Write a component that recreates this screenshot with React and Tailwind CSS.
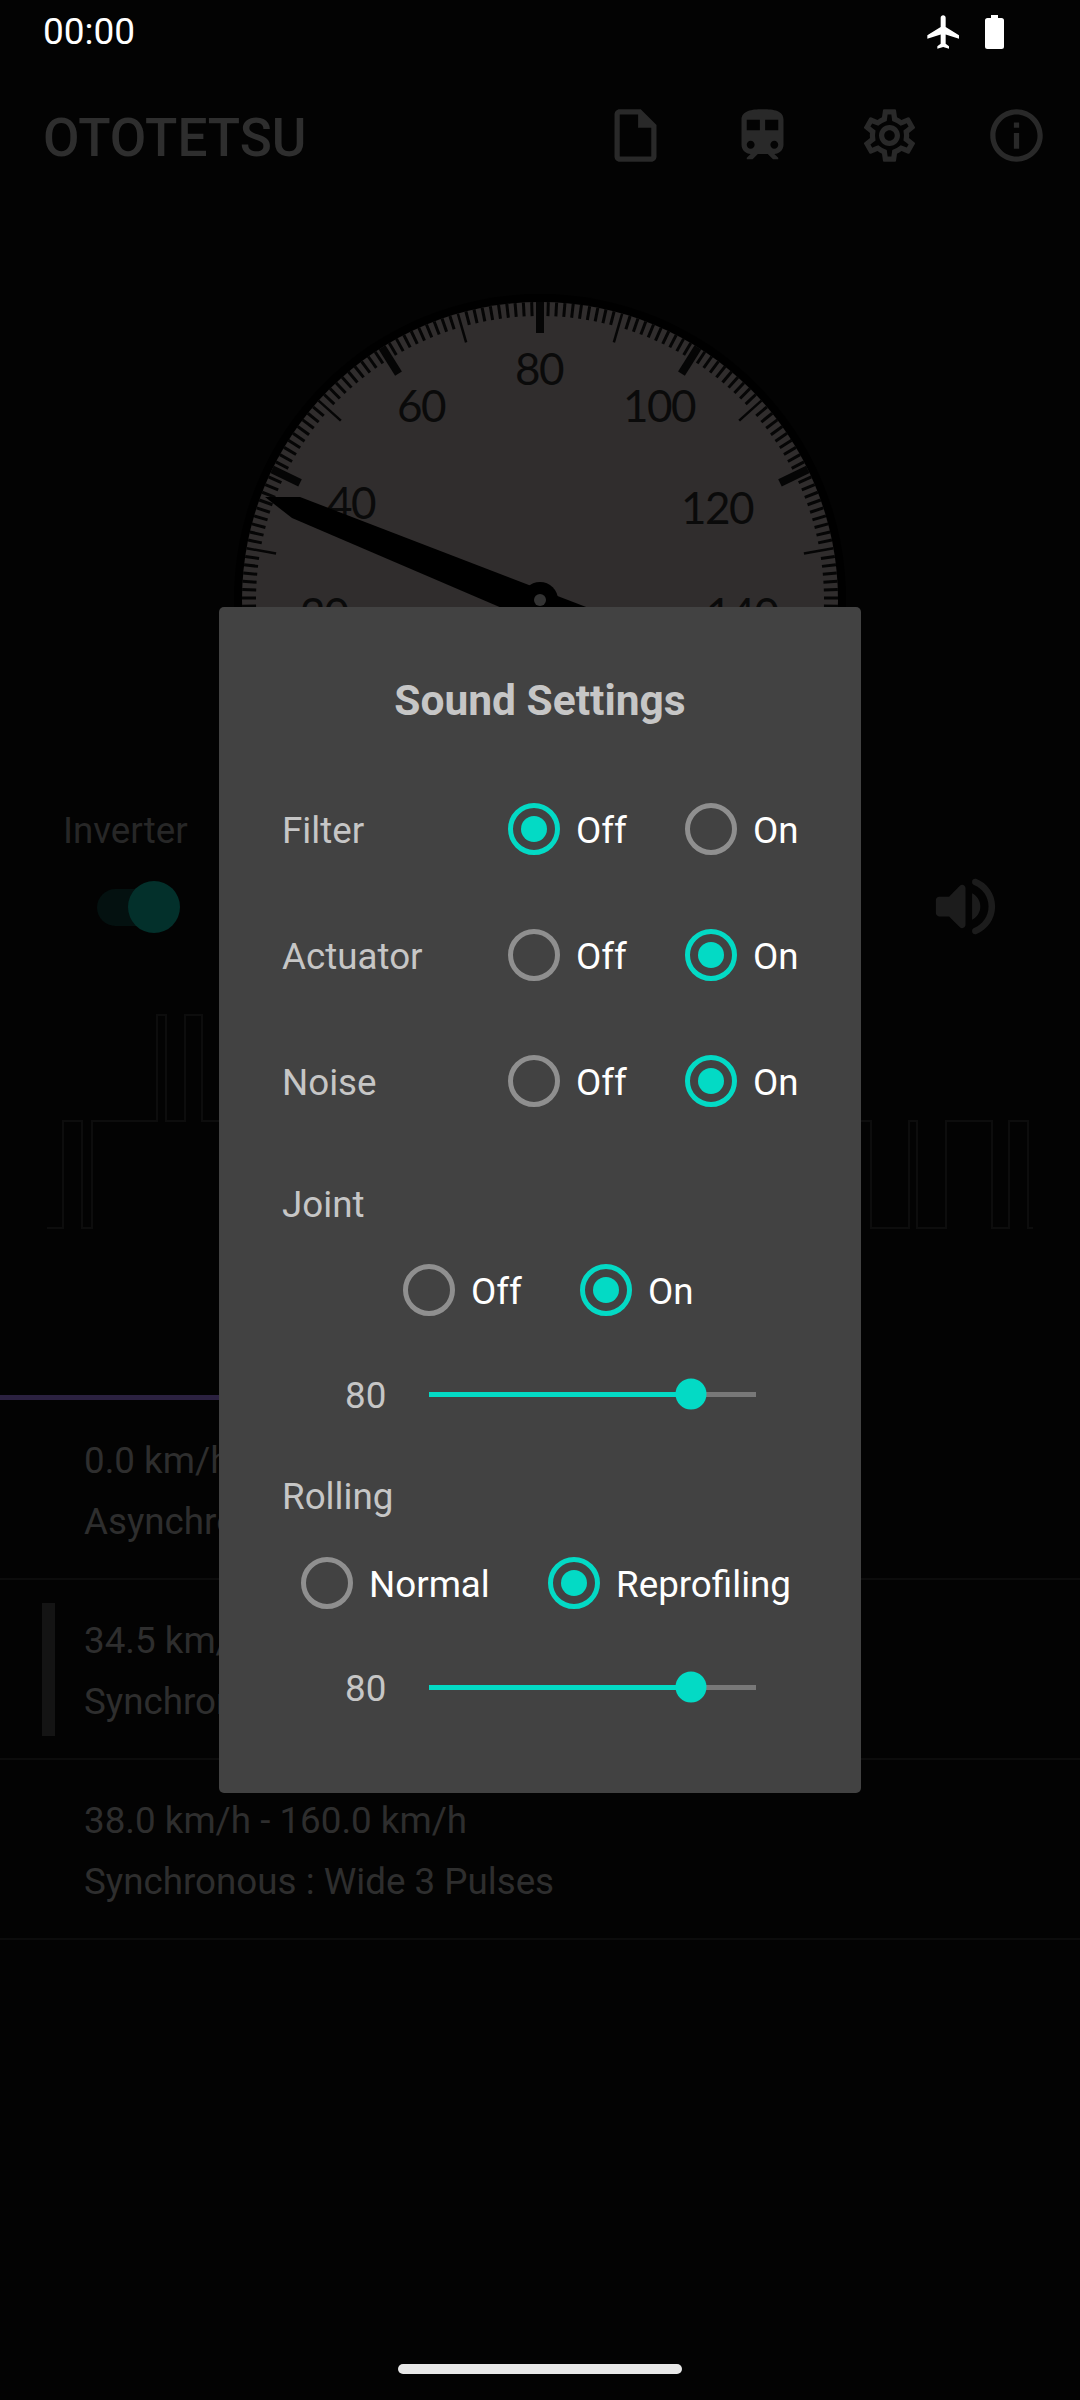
const flightPath = 'M21 16v-2l-8-5V3.5c0-.83-.67-1.5-1.5-1.5S10 2.67 10 3.5V9l-8 5v2l8-2.5V19l-2 1.5V22l3.5-1 3.5 1v-1.5L13 19v-5.5l8 2.5z';
const filePath = 'M14 2H6c-1.1 0-1.99.9-1.99 2L4 20c0 1.1.89 2 1.99 2H18c1.1 0 2-.9 2-2V8l-6-6zM6 20V4h7v5h5v11H6z';
const trainPath = 'M12 2c-4 0-8 .5-8 4v9.5C4 17.43 5.57 19 7.5 19L6 20.5v.5h2.23l2-2H14l2 2h2v-.5L16.5 19c1.93 0 3.5-1.57 3.5-3.5V6c0-3.5-3.58-4-8-4zM7.5 17c-.83 0-1.5-.67-1.5-1.5S6.67 14 7.5 14s1.5.67 1.5 1.5S8.33 17 7.5 17zm3.5-7H6V6h5v4zm2 0V6h5v4h-5zm3.5 7c-.83 0-1.5-.67-1.5-1.5s.67-1.5 1.5-1.5 1.5.67 1.5 1.5-.67 1.5-1.5 1.5z';
const gearPath = 'M19.43 12.98c.04-.32.07-.64.07-.98 0-.34-.03-.66-.07-.98l2.11-1.65c.19-.15.24-.42.12-.64l-2-3.46c-.09-.16-.26-.25-.44-.25-.06 0-.12.01-.17.03l-2.49 1c-.52-.4-1.08-.73-1.69-.98l-.38-2.65C14.46 2.18 14.25 2 14 2h-4c-.25 0-.46.18-.49.42l-.38 2.65c-.61.25-1.17.59-1.69.98l-2.49-1c-.06-.02-.12-.03-.18-.03-.17 0-.34.09-.43.25l-2 3.46c-.13.22-.07.49.12.64l2.11 1.65c-.04.32-.07.65-.07.98 0 .33.03.66.07.98l-2.11 1.65c-.19.15-.24.42-.12.64l2 3.46c.09.16.26.25.44.25.06 0 .12-.01.17-.03l2.49-1c.52.4 1.08.73 1.69.98l.38 2.65c.03.24.24.42.49.42h4c.25 0 .46-.18.49-.42l.38-2.65c.61-.25 1.17-.59 1.69-.98l2.49 1c.06.02.12.03.18.03.17 0 .34-.09.43-.25l2-3.46c.12-.22.07-.49-.12-.64l-2.11-1.65zm-1.98-1.71c.04.31.05.52.05.73 0 .21-.02.43-.05.73l-.14 1.13.89.7 1.08.84-.7 1.21-1.27-.51-1.04-.42-.9.68c-.43.32-.84.56-1.25.73l-1.06.43-.16 1.13-.2 1.35h-1.4l-.19-1.35-.16-1.13-1.06-.43c-.43-.18-.83-.41-1.23-.71l-.91-.7-1.06.43-1.27.51-.7-1.21 1.08-.84.89-.7-.14-1.13c-.03-.31-.05-.54-.05-.74s.02-.43.05-.73l.14-1.13-.89-.7-1.08-.84.7-1.21 1.27.51 1.04.42.9-.68c.43-.32.84-.56 1.25-.73l1.06-.43.16-1.13.2-1.35h1.39l.19 1.35.16 1.13 1.06.43c.43.18.83.41 1.23.71l.91.7 1.06-.43 1.27-.51.7 1.21-1.07.85-.89.7.14 1.13zM12 8c-2.21 0-4 1.79-4 4s1.79 4 4 4 4-1.79 4-4-1.79-4-4-4zm0 6c-1.1 0-2-.9-2-2s.9-2 2-2 2 .9 2 2-.9 2-2 2z';
const infoPath = 'M11 7h2v2h-2zm0 4h2v6h-2zm1-9C6.48 2 2 6.48 2 12s4.48 10 10 10 10-4.48 10-10S17.52 2 12 2zm0 18c-4.41 0-8-3.59-8-8s3.59-8 8-8 8 3.59 8 8-3.59 8-8 8z';
const volumePath = 'M3 10v4c0 .55.45 1 1 1h3l3.29 3.29c.63.63 1.71.18 1.71-.71V6.41c0-.89-1.08-1.34-1.71-.71L7 9H4c-.55 0-1 .45-1 1zm13.5 2c0-1.77-1.02-3.29-2.5-4.03v8.05c1.48-.73 2.5-2.25 2.5-4.02zM14 4.45v.2c0 .38.25.71.6.85C17.18 6.53 19 9.06 19 12s-1.82 5.47-4.4 6.5c-.36.14-.6.47-.6.85v.2c0 .63.63 1.07 1.21.85C18.6 19.11 21 15.84 21 12s-2.4-7.11-5.79-8.4c-.58-.23-1.21.22-1.21.85z';

const Icon = ({ d, className }) => (
  <svg viewBox="0 0 24 24" className={className} fill="currentColor">
    <path d={d} />
  </svg>
);

// gauge labels, centre coordinates inside the 640 box
const gaugeLabels = [
  ['20', 105, 334],
  ['40', 132, 223],
  ['60', 202, 126],
  ['80', 320, 89],
  ['100', 440, 126],
  ['120', 498, 228],
  ['140', 523, 334],
];

const Gauge = () => {
  const ticks = [];
  for (let km = 0; km <= 160; km++) {
    // the dial runs at 1.6 degrees per km/h
    const a = ((km - 80) * 1.6 * Math.PI) / 180;
    const major = km % 20 === 0;
    const mid = km % 10 === 0;
    const inner = major ? 267 : mid ? 268 : 284;
    const width = major ? 8 : mid ? 2.5 : 3;
    ticks.push(
      <line
        key={km}
        x1={320 + inner * Math.sin(a)}
        y1={320 - inner * Math.cos(a)}
        x2={320 + 298 * Math.sin(a)}
        y2={320 - 298 * Math.cos(a)}
        stroke="#050505"
        strokeWidth={width}
      />
    );
  }

  return (
    <svg width="640" height="640" viewBox="0 0 640 640" className="shrink-0">
      <circle cx="320" cy="320" r="306" fill="#000000" />
      <circle cx="320" cy="320" r="298" fill="#302d2d" />
      {ticks}
      {gaugeLabels.map(([label, x, y]) => (
        <text
          key={label}
          x={x - 1}
          y={y - 1}
          textAnchor="middle"
          dominantBaseline="central"
          fill="#0a0a0a"
          fontSize="44"
          letterSpacing="-1.5"
          className="font-['Lato',sans-serif]"
        >
          {label}
        </text>
      ))}
      <polygon points="45,217 80,217 400,340 380,370 72,238" fill="#000000" />
      <circle cx="320" cy="320" r="18" fill="#000000" />
      <circle cx="320" cy="320" r="6" fill="#333333" />
    </svg>
  );
};

const Radio = ({ label, checked, width }) => (
  <div className={`flex items-center gap-[16px] ${width}`}>
    <div
      className={
        checked
          ? 'flex h-[52px] w-[52px] shrink-0 items-center justify-center rounded-full border-[5px] border-[#03dac5]'
          : 'h-[52px] w-[52px] shrink-0 rounded-full border-[5px] border-[#8f8f8f]'
      }
    >
      {checked && <div className="h-[26px] w-[26px] rounded-full bg-[#03dac5]" />}
    </div>
    <span className="pt-[3px] text-[36.75px] leading-[48px] text-white">{label}</span>
  </div>
);

const SettingRow = ({ label, on }) => (
  <div className="flex h-[64px] items-center">
    <span className="w-[226px] pt-[3px] text-[36.75px] leading-[48px] text-[#c6c6c6]">{label}</span>
    <Radio label="Off" checked={!on} width="w-[177px]" />
    <Radio label="On" checked={on} />
  </div>
);

const VolumeSlider = ({ className }) => (
  <div className={`flex h-[40px] items-center pl-[63px] ${className}`}>
    <span className="w-[84px] pt-[3px] text-[36.75px] leading-[48px] text-[#c6c6c6]">80</span>
    <div className="relative h-[5px] w-[327px] bg-[#787878]">
      <div className="h-full w-[80%] bg-[#03dac5]" />
      <div className="absolute left-[80%] top-1/2 h-[31px] w-[31px] -translate-x-1/2 -translate-y-1/2 rounded-full bg-[#03dac5]" />
    </div>
  </div>
);

const waveLeft = '47,1228 63,1228 63,1121 82,1121 82,1228 92,1228 92,1121 157,1121 157,1015 166,1015 166,1121 185,1121 185,1015 202,1015 202,1121 225,1121';
const waveRight = '855,1121 871,1121 871,1228 909,1228 909,1121 917,1121 917,1228 946,1228 946,1121 992,1121 992,1228 1009,1228 1009,1121 1028,1121 1028,1228 1033,1228';

const patterns = [
  ['0.0 km/h - 34.5 km/h', 'Asynchronous', false],
  ['34.5 km/h - 38.0 km/h', 'Synchronous : Wide 9 Pulses', true],
  ['38.0 km/h - 160.0 km/h', 'Synchronous : Wide 3 Pulses', false],
];

export default function App() {
  return (
    <div className="relative h-[2400px] w-[1080px] overflow-hidden bg-[#030303] font-['Roboto',sans-serif]">
      {/* status bar */}
      <div className="flex h-[63px] items-center pl-[43px] pr-[76px] text-white">
        <span className="text-[37px] leading-none">00:00</span>
        <Icon d={flightPath} className="ml-auto h-[40px] w-[40px]" />
        <svg viewBox="0 0 19 34" className="ml-[21px] h-[34px] w-[19px]" fill="currentColor">
          <path d="M6 0h7v3h3.5A2.5 2.5 0 0 1 19 5.5V31.5A2.5 2.5 0 0 1 16.5 34h-14A2.5 2.5 0 0 1 0 31.5V5.5A2.5 2.5 0 0 1 2.5 3H6z" />
        </svg>
      </div>

      {/* app bar */}
      <div className="flex h-[150px] items-center pl-[43px] text-[#2e2e2e]">
        <span className="w-[560.5px] text-[53px] font-medium leading-none">OTOTETSU</span>
        <div className="mb-[5px] flex gap-[64px] text-[#292929]">
          <Icon d={filePath} className="h-[63px] w-[63px]" />
          <Icon d={trainPath} className="h-[63px] w-[63px]" />
          <Icon d={gearPath} className="h-[63px] w-[63px]" />
          <Icon d={infoPath} className="h-[63px] w-[63px]" />
        </div>
      </div>

      {/* gauge and side controls */}
      <div className="mt-[67px] flex h-[640px]">
        <div className="w-[220px] pl-[63px] pt-[527px]">
          <div className="text-[36.75px] leading-[48px] text-[#272727]">Inverter</div>
          <div className="relative ml-[34px] mt-[26px] flex h-[52px] w-[83px] items-center">
            <div className="h-[37px] w-[72px] rounded-full bg-[#041110]" />
            <div className="absolute right-0 top-0 h-[52px] w-[52px] rounded-full bg-[#03302b]" />
          </div>
        </div>
        <Gauge />
        <div className="w-[220px] pl-[66px] pt-[587px]">
          <Icon d={volumePath} className="h-[79px] w-[79px] text-[#1c1c1c]" />
        </div>
      </div>

      {/* waveform */}
      <svg viewBox="0 1010 1080 230" className="mt-[90px] block h-[230px] w-[1080px]" fill="none" stroke="#0d0d0d" strokeWidth="2">
        <polyline points={waveLeft} />
        <polyline points={waveRight} />
      </svg>

      {/* pattern list */}
      <div className="mt-[155px] h-[5px] w-[600px] bg-[#2b2140]" />
      <div>
        {patterns.map(([speed, mode, active]) => (
          <div key={speed} className="flex h-[180px] items-center border-b-[2px] border-[#0c0c0c]">
            <div className={active ? 'ml-[42px] h-[133px] w-[13px] bg-[#141414]' : 'ml-[42px] h-[133px] w-[13px]'} />
            <div className="pl-[29px] pt-[3px] text-[36.75px] leading-[61px] text-[#2e2e2e]">
              <div>{speed}</div>
              <div>{mode}</div>
            </div>
          </div>
        ))}
      </div>

      {/* home indicator */}
      <div className="absolute bottom-[26px] left-[398px] h-[10px] w-[284px] rounded-full bg-[#e8e8e8]" />

      {/* dialog */}
      <div className="absolute inset-0 flex items-center justify-center">
        <div className="h-[1186px] w-[642px] rounded-[5px] bg-[#424242] pl-[63px] pt-[69px]">
          <div className="-ml-[63px] text-center text-[42.5px] font-bold leading-[50px] text-[#c6c6c6]">Sound Settings</div>
          <div className="mt-[71px] flex flex-col gap-[62px]">
            <SettingRow label="Filter" on={false} />
            <SettingRow label="Actuator" on />
            <SettingRow label="Noise" on />
          </div>
          <div className="mt-[68px] text-[36.75px] leading-[48px] text-[#c6c6c6]">Joint</div>
          <div className="ml-[121px] mt-[29px] flex h-[64px] items-center">
            <Radio label="Off" checked={false} width="w-[177px]" />
            <Radio label="On" checked />
          </div>
          <VolumeSlider className="mt-[52px]" />
          <div className="mt-[59px] text-[36.75px] leading-[48px] text-[#c6c6c6]">Rolling</div>
          <div className="ml-[19px] mt-[30px] flex h-[64px] items-center">
            <Radio label="Normal" checked={false} width="w-[247px]" />
            <Radio label="Reprofiling" checked />
          </div>
          <VolumeSlider className="mt-[52px]" />
        </div>
      </div>
    </div>
  );
}
